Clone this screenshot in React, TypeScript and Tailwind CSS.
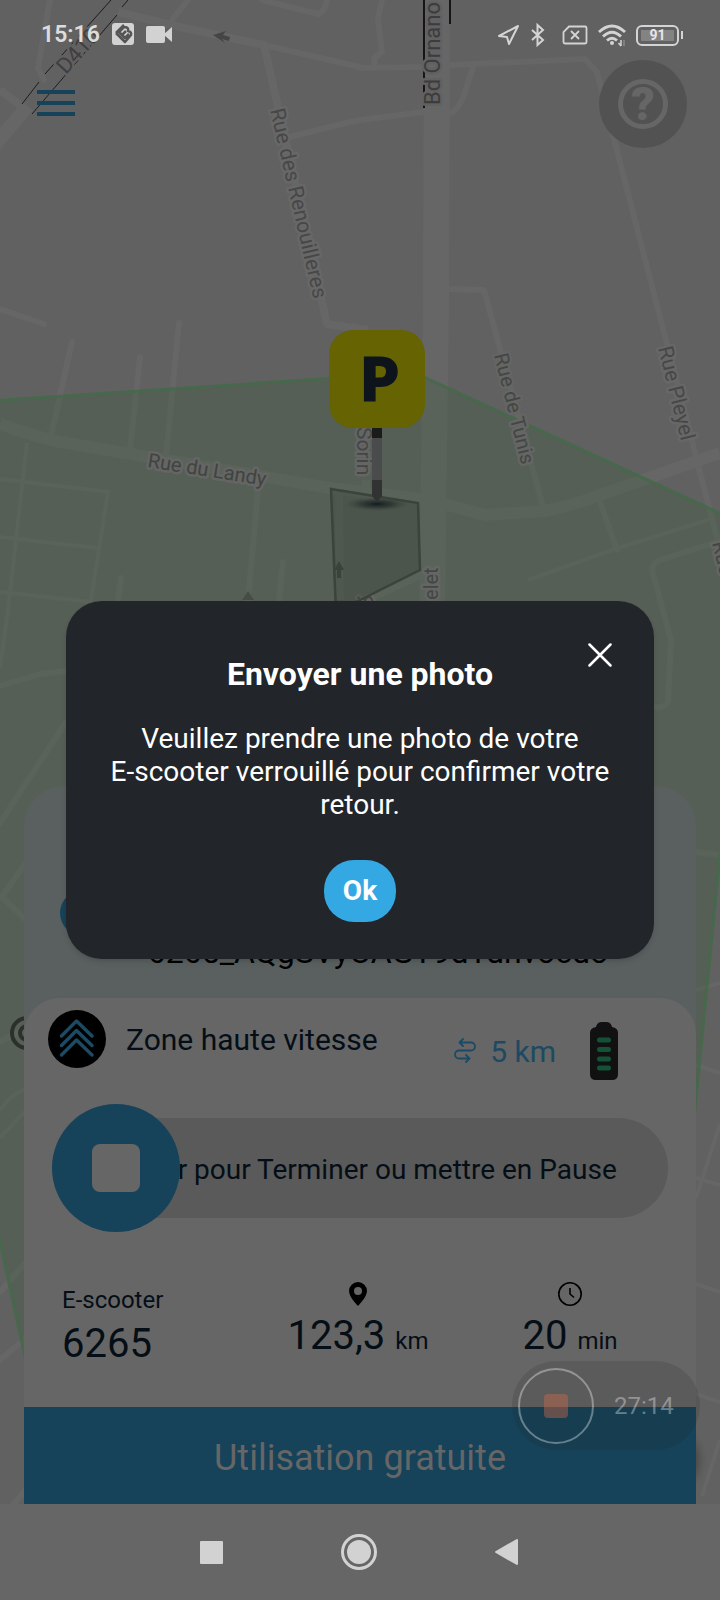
import type { ReactNode } from 'react';

interface MapLabel {
  text: string;
  x: number;
  y: number;
  rotate: number;
  size: number;
  color: string;
  halo: string;
}

const thinRoads = [
  'M0 479 L108 492 L91 600',
  'M27 443 L8 610 L0 668',
  'M0 537 L97 548',
  'M0 592 L92 602',
  'M528 580 L612 550 L714 518',
  'M24 1090 Q14 1092 0 1110',
  'M0 1138 L26 1110',
  'M696 990 L720 983',
  'M696 1065 L720 1073',
  'M720 1124 L696 1198',
  'M696 1178 L720 1185',
  'M696 1284 L720 1292',
  'M696 1394 L720 1402',
  'M720 1440 L702 1496',
];

const roads = [
  'M50 0 L38 68 L44 80',
  'M188 0 L172 20',
  'M262 0 L318 14 Q325 12 327 0',
  'M382 0 L378 18 L382 52 L374 58 L375 68',
  'M360 68 L424 67',
  'M264 45 L360 67',
  'M290 137 Q340 124 360 120 L424 112',
  'M450 65 L585 59 L597 72 L604 100 L720 550',
  'M474 64 L463 98 Q458 110 449 114',
  'M449 289 L484 290 L543 507',
  'M0 309 L44 324',
  'M72 342 L51 436',
  'M140 357 L130 450',
  'M179 323 L166 455',
  'M258 490 L248 600',
  'M283 562 L279 600',
  'M121 578 L118 600',
  'M600 502 L617 550',
  'M720 541 L660 560 Q650 564 653 574 L671 640 L668 702 Q665 708 655 707',
  'M0 686 L40 674 L66 671',
  'M66 722 L0 823',
  'M26 862 L2 897 L26 920',
  'M696 852 L720 855',
  'M0 1042 L26 1028',
  'M0 1292 L26 1262',
  'M0 1360 L26 1338',
  'M10 1508 L26 1490',
];

const wideRoads = [
  'M118 12 L180 27 L264 45 L327 324 L368 330',
  'M0 90 L24 108',
  'M366 480 L366 505 M339 495 L340 600',
  'M342 612 L422 574',
];

const mainRoads = [
  'M0 424 Q30 435 55 441 L330 488 L430 500 L485 515 L545 511 Q575 505 600 495 L720 453',
];

const labels: MapLabel[] = [
  { text: 'D410', x: 66, y: 75, rotate: -48, size: 22, color: '#3f3f3f', halo: '#616161' },
  { text: 'Rue des Renouilleres', x: 270, y: 110, rotate: 77, size: 21, color: '#474747', halo: '#676767' },
  { text: 'Bd Ornano', x: 440, y: 105, rotate: -90, size: 22, color: '#3c3c3c', halo: '#616161' },
  { text: 'Rue de Tunis', x: 494, y: 355, rotate: 76, size: 20, color: '#434743', halo: '#646564' },
  { text: 'Rue Pleyel', x: 658, y: 348, rotate: 76, size: 21, color: '#474747', halo: '#676767' },
  { text: 'Rue du Landy', x: 147, y: 467, rotate: 9, size: 20, color: '#404440', halo: '#646564' },
  { text: 'Sorin', x: 357, y: 427, rotate: 90, size: 21, color: '#434743', halo: '#646564' },
  { text: 'Passelet', x: 438, y: 644, rotate: -90, size: 20, color: '#434743', halo: '#646564' },
  { text: 'in', x: 362, y: 611, rotate: -25, size: 20, color: '#434743', halo: '#646564' },
  { text: 'Rue', x: 712, y: 543, rotate: 76, size: 20, color: '#434743', halo: '#646564' },
];

const CityMap = () => (
  <svg
    className="absolute inset-0 h-full w-full font-[Roboto,sans-serif]"
    viewBox="0 0 720 1504"
    preserveAspectRatio="xMidYMin slice"
    aria-hidden="true"
  >
    <defs>
      <radialGradient id="pinShadow">
        <stop offset="0" stopColor="#141b22" />
        <stop offset="0.5" stopColor="#28302f" stopOpacity="0.7" />
        <stop offset="1" stopColor="#3a423b" stopOpacity="0" />
      </radialGradient>
      <radialGradient id="buttonShadow">
        <stop offset="0.7" stopColor="#3a3a3a" stopOpacity="0.5" />
        <stop offset="1" stopColor="#555555" stopOpacity="0" />
      </radialGradient>
    </defs>
    <rect width="720" height="1504" fill="#616161" />
    <g fill="none" stroke="#666666" strokeLinejoin="round">
      {thinRoads.map((d) => (
        <path key={d} d={d} strokeWidth="4" />
      ))}
      {roads.map((d) => (
        <path key={d} d={d} strokeWidth="6" strokeLinecap="round" />
      ))}
      {wideRoads.map((d) => (
        <path key={d} d={d} strokeWidth="8" />
      ))}
      {mainRoads.map((d) => (
        <path key={d} d={d} strokeWidth="12" />
      ))}
      <path d="M28 106 L-10 150" strokeWidth="14" />
      <path d="M437 0 L436 300 L432 620" strokeWidth="26" />
    </g>

    {/* Tunnels */}
    <path d="M424 0 V108" stroke="#161616" strokeWidth="2" />
    <path d="M450 0 V24" stroke="#161616" strokeWidth="2" />
    <path d="M111 0 L45 74 M39 82 L22 104" stroke="#1c1c1c" strokeWidth="1" />
    <path d="M128 0 L122 7 M117 15 L32 114" stroke="#1c1c1c" strokeWidth="1" />

    {/* Operating zone */}
    <path
      d="M-20 401.500 L415 373 L752 528 L690 1160 L300 1700 L60 1517 L0 1242 L-20 1150 Z"
      fill="#405e3c"
      fillOpacity="0.3"
      stroke="#45694a"
      strokeWidth="3"
      strokeOpacity="0.9"
    />

    {labels.map((label) => (
      <text
        key={label.text}
        transform={`translate(${label.x} ${label.y}) rotate(${label.rotate})`}
        fontSize={label.size}
        fill={label.color}
        stroke={label.halo}
        strokeWidth="5"
        strokeLinejoin="round"
        paintOrder="stroke"
      >
        {label.text}
      </text>
    ))}

    {/* One-way arrows */}
    <path d="M213 35 L226 31 L223 35 L230 37 L229 41 L222 39 L225 43 Z" fill="#454545" />
    <path d="M339 561 L344 570 H341 V578 H337 V570 H334 Z" fill="#3e463e" />
    <path d="M248 591 L254 600 H242 Z" fill="#454d45" />

    {/* Parking area and its pin */}
    <path
      d="M331 489 L418 503 L420 570 L336 612 Z"
      fill="#2f382f"
      fillOpacity="0.24"
      stroke="#3b433b"
      strokeWidth="2.500"
    />
    <ellipse cx="377" cy="504" rx="32" ry="7" fill="url(#pinShadow)" />
    <rect x="372" y="426" width="10" height="13" fill="#1b1b1b" />
    <rect x="372" y="438" width="10" height="43" fill="#4a4b4d" />
    <path d="M372 480 H382 V496 L377 502 L372 496 Z" fill="#303332" />
    <rect x="329" y="330" width="96" height="98" rx="24" fill="#656302" />
    <text
      x="361"
      y="400"
      fontFamily="Lato, sans-serif"
      fontWeight="900"
      fontSize="58"
      fill="#0e141b"
      stroke="#0e141b"
      strokeWidth="3"
    >
      P
    </text>

    {/* Station at the left edge */}
    <circle cx="27" cy="1033" r="15" fill="none" stroke="#2c302c" strokeWidth="4" />
    <circle cx="27" cy="1033" r="7" fill="none" stroke="#2c302c" strokeWidth="4" />
    <circle cx="670" cy="1460" r="38" fill="url(#buttonShadow)" />
  </svg>
);

const StatusBar = () => (
  <div className="flex h-[70px] items-center justify-between pr-[37px] pl-[41px] text-[#dcdcdc]">
    <div className="flex items-center gap-3">
      <span className="text-[23px] font-semibold">15:16</span>
      <svg width="22" height="22" viewBox="0 0 22 22" className="-mt-[2px]" aria-hidden="true">
        <rect width="22" height="22" rx="3" fill="#d2d2d2" />
        <g fill="none" stroke="#555555" strokeWidth="2.500" strokeLinejoin="round">
          <path d="M4 10 L12 2 M4 10 L13 19 L19 12 Q20 9 16 8 Q17 4 12 4 L7 9 L13 15 L17 11" />
          <path d="M10 12 L14 8" />
        </g>
      </svg>
      <svg width="26" height="18" viewBox="0 0 26 18" fill="#d2d2d2" aria-hidden="true">
        <rect width="19" height="17" rx="2" />
        <path d="M18 8 L26 1 V16 L18 9 Z" />
      </svg>
    </div>
    <div className="flex items-center gap-[10px]">
      <svg width="22" height="22" viewBox="0 0 22 22" fill="none" stroke="#d4d4d4" strokeWidth="2" strokeLinejoin="round" aria-hidden="true">
        <path d="M20 2 L11 20 L9 13 L1 12 Z" />
      </svg>
      <svg width="16" height="24" viewBox="0 0 16 24" fill="none" stroke="#d4d4d4" strokeWidth="2" aria-hidden="true">
        <path d="M2 7 L13 17 L7.500 22 V2 L13 7 L2 17" />
      </svg>
      <svg width="32" height="20" viewBox="2 0 32 20" fill="none" stroke="#d4d4d4" strokeWidth="1.800" aria-hidden="true">
        <path d="M15 1.500 H31 Q32.500 1.500 32.500 3 V17 Q32.500 18.500 31 18.500 H11 Q9.500 18.500 9.500 17 V7 Z" />
        <path d="M17 6 L25 14 M25 6 L17 14" />
      </svg>
      <svg width="28" height="24" viewBox="0 0 28 24" fill="none" stroke="#d4d4d4" strokeWidth="2.800" aria-hidden="true">
        <path d="M1 9 Q14 -3 27 9" />
        <path d="M5 13.500 Q14 5 23 13.500" />
        <path d="M9 17.500 Q14 13 19 17.500" />
        <circle cx="14" cy="20" r="2" fill="#d4d4d4" stroke="none" />
        <path d="M23 17 V23 M20.500 20 L23 23" strokeWidth="1.500" />
        <path d="M26 17 V23" stroke="#8a8a8a" strokeWidth="1.500" />
      </svg>
      <div className="flex items-center gap-[2px]">
        <div className="flex h-[21px] w-[43px] items-center justify-center rounded-md border-2 border-[#d4d4d4] p-[3px]">
          <span className="flex h-full w-full items-center justify-center bg-[#838383] text-sm font-bold text-[#e6e6e6]">
            91
          </span>
        </div>
        <div className="h-2 w-[2px] bg-[#d4d4d4]" />
      </div>
    </div>
  </div>
);

interface StatProps {
  icon: ReactNode;
  value: string;
  unit: string;
}

const Stat = ({ icon, value, unit }: StatProps) => (
  <div className="flex w-[212px] flex-col items-center gap-[2px]">
    {icon}
    <p className="flex items-baseline gap-[10px] text-[40px] leading-[56px]">
      {value}
      <span className="text-2xl">{unit}</span>
    </p>
  </div>
);

const RideCard = () => (
  <section className="relative mx-6 mt-auto rounded-t-[40px] bg-[#5a6060] text-[#050e16]">
    <div className="flex h-[212px] flex-col justify-end px-9 pb-[30px]">
      <span className="h-[46px] w-[46px] rounded-full bg-[#16425a]" />
      <p className="pl-9 text-center text-[32px] leading-8 whitespace-nowrap text-black">
        6265_AQgSVyOAGT9dTdnvocdo
      </p>
    </div>

    <div className="rounded-t-[36px] bg-[#666666] pt-3">
      <div className="flex h-[94px] items-start justify-between pr-[78px] pl-6">
        <div className="flex items-center gap-5">
          <svg width="58" height="58" viewBox="0 0 58 58" aria-hidden="true">
            <circle cx="29" cy="29" r="29" fill="#000000" />
            <g fill="none" stroke="#1c4a63" strokeWidth="3.500" strokeLinecap="round" strokeLinejoin="round">
              <path d="M13.500 26 L28.500 11 L44 26" />
              <path d="M13.500 35.500 L28.500 20.500 L44 35.500" />
              <path d="M13.500 45 L28.500 30 L44 45" />
            </g>
          </svg>
          <h2 className="text-[30px]">Zone haute vitesse</h2>
        </div>
        <div className="flex items-center pt-3 text-[#1d4a62]">
          <svg width="22" height="26" viewBox="0 0 22 26" fill="none" stroke="currentColor" strokeWidth="1.800" strokeLinecap="round" strokeLinejoin="round" aria-hidden="true">
            <path d="M9 1 L5.500 4.500 L9 8 M6 4.500 H17 A4 4 0 0 1 17 12.500 H5 A4 4 0 0 0 5 20.500 H15 M12 17 L15.500 20.500 L12 24" />
          </svg>
          <span className="mr-[34px] ml-[14px] text-[30px]">5 km</span>
          <svg width="28" height="58" viewBox="0 0 28 58" aria-hidden="true">
            <path d="M6 5 Q7 0 12 0 H16 Q21 0 22 5 Q28 6 28 11 V52 Q28 58 22 58 H6 Q0 58 0 52 V11 Q0 6 6 5 Z" fill="#111111" />
            <g stroke="#145237" strokeWidth="5" strokeLinecap="round">
              <path d="M9.500 18 H18.500 M9.500 27.500 H18.500 M9.500 37 H18.500 M9.500 46 H18.500" />
            </g>
          </svg>
        </div>
      </div>

      <div className="relative mx-7 mb-[50px] flex h-32 items-center">
        <div className="flex h-[100px] flex-1 items-center justify-center rounded-full bg-[#5a5a5a] pt-1 pr-[2px] text-[28px] whitespace-nowrap">
          Glisser pour Terminer ou mettre en Pause
        </div>
        <button
          type="button"
          aria-label="Terminer"
          className="absolute left-0 flex h-32 w-32 items-center justify-center rounded-full bg-[#16425a]"
        >
          <span className="h-12 w-12 rounded-lg bg-[#666666]" />
        </button>
      </div>

      <div className="flex h-[125px] items-start pr-5 pl-[38px]">
        <div className="flex-1 pt-[2px]">
          <p className="text-2xl">E-scooter</p>
          <p className="text-[40px] leading-[56px]">6265</p>
        </div>
        <Stat
          icon={
            <svg width="18" height="24" viewBox="0 0 18 24" aria-hidden="true">
              <path
                fillRule="evenodd"
                d="M9 0 A9 9 0 0 0 0 9 C0 15 9 24 9 24 C9 24 18 15 18 9 A9 9 0 0 0 9 0 Z M9 5 A4 4 0 1 1 9 13 A4 4 0 1 1 9 5 Z"
                fill="#000000"
              />
            </svg>
          }
          value="123,3"
          unit="km"
        />
        <Stat
          icon={
            <svg width="24" height="24" viewBox="0 0 24 24" fill="none" stroke="#000000" strokeWidth="1.600" aria-hidden="true">
              <circle cx="12" cy="12" r="11.200" />
              <path d="M12 6 V12 L16 15.500" />
            </svg>
          }
          value="20"
          unit="min"
        />
      </div>
    </div>

    <footer className="flex h-[97px] items-center justify-center bg-[#16425a] pt-1 text-4xl text-[#666666]">
      Utilisation gratuite
    </footer>
  </section>
);

const PhotoDialog = () => (
  <div className="absolute inset-x-0 top-0 bottom-[41px] flex items-center px-[66px]">
    <div
      role="dialog"
      aria-modal="true"
      aria-labelledby="photo-title"
      className="relative flex w-full flex-col items-center rounded-[36px] bg-[#22252a] px-10 pt-[53px] pb-[37px] text-center text-white shadow-md"
    >
      <button type="button" aria-label="Fermer" className="absolute top-[42px] right-[42px]">
        <svg width="24" height="24" viewBox="0 0 24 24" stroke="#ffffff" strokeWidth="2.500" strokeLinecap="round">
          <path d="M1.500 1.500 L22.500 22.500 M22.500 1.500 L1.500 22.500" />
        </svg>
      </button>
      <h1 id="photo-title" className="text-[32px] leading-10 font-bold">
        Envoyer une photo
      </h1>
      <p className="mt-7 text-[28px] leading-[33px]">
        Veuillez prendre une photo de votre <span className="whitespace-nowrap">E-scooter</span> verrouillé pour
        confirmer votre retour.
      </p>
      <button type="button" className="mt-[39px] h-[62px] w-[72px] rounded-[30px] bg-[#34a8e2] text-[28px] font-bold">
        Ok
      </button>
    </div>
  </div>
);

const Recorder = () => (
  <div className="absolute right-5 bottom-[150px] flex h-[89px] w-[188px] items-center gap-5 rounded-full bg-[#222222]/15 pl-[6px]">
    <button
      type="button"
      aria-label="Stop"
      className="flex h-[76px] w-[76px] items-center justify-center rounded-full border-2 border-white/35"
    >
      <span className="h-6 w-6 rounded-sm bg-[#c5694a]/45" />
    </button>
    <span className="text-2xl text-white/35">27:14</span>
  </div>
);

export default function App() {
  return (
    <div className="relative flex min-h-screen flex-col bg-[#666666] font-[Roboto,sans-serif]">
      <main className="relative flex flex-1 flex-col overflow-hidden">
        <CityMap />
        <header className="relative">
          <StatusBar />
          <div className="-mt-[10px] flex items-center justify-between pr-[33px] pl-[37px]">
            <button type="button" aria-label="Menu" className="mb-[2px] flex w-[38px] flex-col gap-[7px]">
              <span className="h-1 w-full bg-[#16425a]" />
              <span className="h-1 w-full bg-[#16425a]" />
              <span className="h-1 w-full bg-[#16425a]" />
            </button>
            <button
              type="button"
              aria-label="Aide"
              className="flex h-[88px] w-[88px] items-center justify-center rounded-full bg-[#525252]"
            >
              <span className="flex h-[50px] w-[50px] items-center justify-center rounded-full border-[5px] border-[#666666] text-[46px] leading-none font-black text-[#666666]">
                ?
              </span>
            </button>
          </div>
        </header>
        <RideCard />
      </main>

      <nav className="flex h-24 items-center justify-center gap-[118px] pr-[2px]">
        <button type="button" aria-label="Applications" className="h-[23px] w-[23px] rounded-[1px] bg-[#d2d2d2]" />
        <button type="button" aria-label="Accueil" className="h-9 w-9 rounded-full border-[3px] border-[#d2d2d2] p-[3px]">
          <span className="block h-full w-full rounded-full bg-[#d2d2d2]" />
        </button>
        <button type="button" aria-label="Retour">
          <svg width="23" height="26" viewBox="0 0 23 26" fill="#d2d2d2" stroke="#d2d2d2" strokeWidth="2" strokeLinejoin="round">
            <path d="M22 1 V25 L1 13 Z" />
          </svg>
        </button>
      </nav>

      <PhotoDialog />
      <Recorder />
    </div>
  );
}
